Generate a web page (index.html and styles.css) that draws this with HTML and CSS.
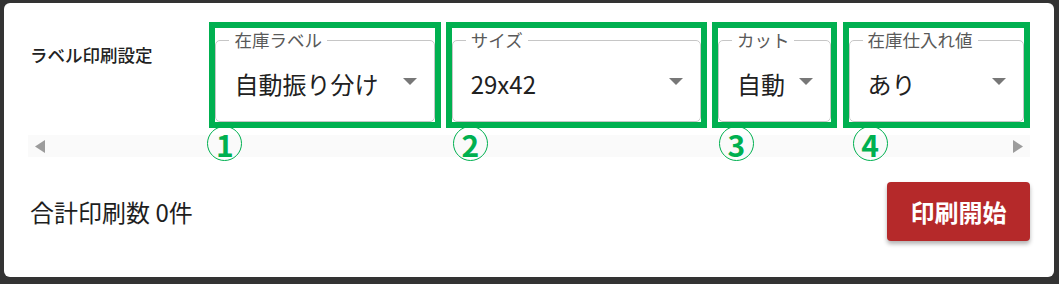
FILE: index.html
```html
<!DOCTYPE html>
<html lang="ja">

<head>
    <meta charset="UTF-8">
    <meta name="viewport" content="width=device-width, initial-scale=1.0">
    <title>ラベル印刷</title>
    <link rel="stylesheet" href="styles.css">
</head>

<body>
    <div class="panel">
        <div class="scroller">
            <div class="settings">
                <div class="settings-title">ラベル印刷設定</div>

                <div class="mark-box box-label">
                    <fieldset class="select">
                        <legend>在庫ラベル</legend>
                        <div class="select-value">
                            <span>自動振り分け</span>
                            <svg class="caret" width="14" height="7" viewBox="0 0 14 7"><path d="M0 0h14L7 7z" /></svg>
                        </div>
                    </fieldset>
                    <span class="num num-1">1</span>
                </div>

                <div class="mark-box box-size">
                    <fieldset class="select">
                        <legend>サイズ</legend>
                        <div class="select-value">
                            <span>29x42</span>
                            <svg class="caret" width="14" height="7" viewBox="0 0 14 7"><path d="M0 0h14L7 7z" /></svg>
                        </div>
                    </fieldset>
                    <span class="num num-2">2</span>
                </div>

                <div class="mark-box box-cut">
                    <fieldset class="select">
                        <legend>カット</legend>
                        <div class="select-value">
                            <span>自動</span>
                            <svg class="caret" width="14" height="7" viewBox="0 0 14 7"><path d="M0 0h14L7 7z" /></svg>
                        </div>
                    </fieldset>
                    <span class="num num-3">3</span>
                </div>

                <div class="mark-box box-cost">
                    <fieldset class="select">
                        <legend>在庫仕入れ値</legend>
                        <div class="select-value">
                            <span>あり</span>
                            <svg class="caret" width="14" height="7" viewBox="0 0 14 7"><path d="M0 0h14L7 7z" /></svg>
                        </div>
                    </fieldset>
                    <span class="num num-4">4</span>
                </div>
            </div>

            <div class="scrollbar">
                <svg width="10" height="13" viewBox="0 0 10 13"><path d="M10 0v13L0 6.5z" /></svg>
                <svg width="10" height="13" viewBox="0 0 10 13"><path d="M0 0v13l10-6.5z" /></svg>
            </div>
        </div>

        <div class="footer">
            <span class="total">合計印刷数 0件</span>
            <button type="button" class="print-btn">印刷開始</button>
        </div>
    </div>
</body>

</html>
```

FILE: styles.css
```css
/* General Reset */
* {
    margin: 0;
    padding: 0;
    box-sizing: border-box;
    font-family: 'Noto Sans CJK JP', 'Noto Sans', sans-serif;
}

body {
    background: #333;
    padding: 3px 5px 7px 4px;
}

.panel {
    width: 1050px;
    height: 274px;
    background: #fff;
    border-radius: 6px;
    padding: 19px 24px 0 24px;
}

/* Settings row */
.settings {
    display: flex;
    align-items: flex-start;
    gap: 5px;
}

.settings-title {
    width: 177px;
    padding: 21px 0 0 2px;
    font-size: 17.5px;
    line-height: 24px;
    font-weight: 500;
    color: #222;
}

.mark-box {
    position: relative;
    height: 106px;
    border: 6px solid #00b050;
}

.box-label {
    width: 232px;
}

.box-size {
    width: 262px;
}

.box-cut {
    width: 125px;
}

.box-cost {
    width: 188px;
    margin-left: 1px;
}

.select {
    border: 1px solid #c6c6c6;
    border-radius: 5px;
    padding: 16px 17px 21px 13px;
}

.select legend {
    padding: 0 5px;
    font-size: 17.5px;
    line-height: 24px;
    color: #595959;
}

.select-value {
    display: flex;
    align-items: center;
    justify-content: space-between;
    padding-left: 5px;
    font-size: 24px;
    line-height: 32px;
    color: #212121;
}

.caret {
    margin-bottom: 5px;
    fill: #777;
}

/* Annotation numbers */
.num {
    position: absolute;
    top: calc(100% + 4px);
    width: 35px;
    height: 35px;
    border: 1.5px solid #00b050;
    border-radius: 50%;
    display: flex;
    align-items: center;
    justify-content: center;
    font-size: 30px;
    font-weight: 700;
    line-height: 1;
    color: #00b050;
}

.num-1 {
    left: -8px;
}

.num-2 {
    left: 1px;
}

.num-3 {
    left: 1px;
}

.num-4 {
    left: 4px;
}

/* Fake horizontal scrollbar */
.scrollbar {
    margin-top: 7px;
    height: 22px;
    background: #fafafa;
    display: flex;
    align-items: center;
    justify-content: space-between;
    padding: 0 7px;
}

.scrollbar svg {
    fill: #9c9c9c;
}

/* Footer */
.footer {
    display: flex;
    align-items: center;
    justify-content: space-between;
    margin-top: 25px;
    padding-left: 2px;
}

.total {
    font-size: 24px;
    line-height: 32px;
    color: #1e1e1e;
}

.print-btn {
    width: 143px;
    height: 59px;
    border: none;
    border-radius: 4px;
    background: #b5292a;
    color: #fff;
    font-size: 24px;
    font-weight: 700;
    box-shadow: 0 3px 4px rgba(0, 0, 0, 0.3);
    cursor: pointer;
}
```
